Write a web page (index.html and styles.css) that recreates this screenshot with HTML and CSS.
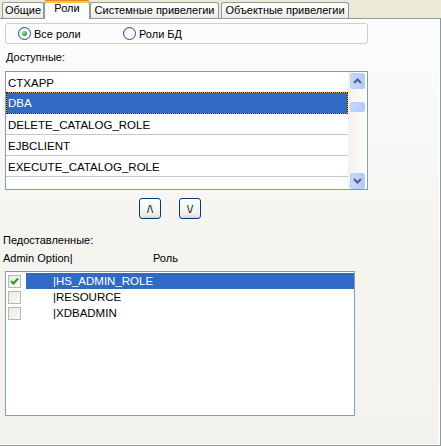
FILE: index.html
```html
<!DOCTYPE html>
<html>
<head>
<meta charset="utf-8">
<link rel="stylesheet" href="styles.css">
</head>
<body>
<div class="tabs">
  <div class="tab t1">Общие</div>
  <div class="tab active t2">Роли</div>
  <div class="tab t3">Системные привелегии</div>
  <div class="tab t4">Объектные привелегии</div>
</div>
<div class="panel">
  <div class="group">
    <div class="radio r1"><span class="circle checked"></span><span>Все роли</span></div>
    <div class="radio r2"><span class="circle"></span><span>Роли БД</span></div>
  </div>
  <div class="label lbl1">Доступные:</div>
  <div class="list1">
    <div class="rows">
      <div class="row">CTXAPP</div>
      <div class="row sel">DBA</div>
      <div class="row">DELETE_CATALOG_ROLE</div>
      <div class="row">EJBCLIENT</div>
      <div class="row">EXECUTE_CATALOG_ROLE</div>
    </div>
    <div class="scroll">
      <div class="sbtn up"><svg width="9" height="6" viewBox="0 0 9 6"><path d="M1 5 L4.5 1.5 L8 5" fill="none" stroke="#4d6185" stroke-width="2"/></svg></div>
      <div class="thumb"></div>
      <div class="track"></div>
      <div class="sbtn down"><svg width="9" height="6" viewBox="0 0 9 6"><path d="M1 1 L4.5 4.5 L8 1" fill="none" stroke="#4d6185" stroke-width="2"/></svg></div>
    </div>
  </div>
  <div class="btnrow">
    <div class="btn">/\</div>
    <div class="btn">\/</div>
  </div>
  <div class="label lbl2">Педоставленные:</div>
  <div class="header"><span class="h1">Admin Option|</span><span class="h2">Роль</span></div>
  <div class="list2">
    <div class="grow"><span class="cb checked"><svg width="9" height="9" viewBox="0 0 9 9"><path d="M1 4 L3.5 6.5 L8 1.5" fill="none" stroke="#21a121" stroke-width="2"/></svg></span><span class="cell sel">|HS_ADMIN_ROLE</span></div>
    <div class="grow"><span class="cb"></span><span class="cell">|RESOURCE</span></div>
    <div class="grow"><span class="cb"></span><span class="cell">|XDBADMIN</span></div>
  </div>
</div>
</body>
</html>
```
FILE: styles.css
```css
html, body {
  margin: 0;
  padding: 0;
}
body {
  width: 441px;
  height: 446px;
  background: #ece9d8;
  font-family: "Liberation Sans", Arial, sans-serif;
  font-size: 11px;
  color: #000;
  overflow: hidden;
}
.tabs {
  display: flex;
  align-items: flex-end;
  height: 18px;
  padding-left: 2px;
}
.tab {
  box-sizing: border-box;
  height: 16px;
  border: 1px solid #919b9c;
  border-bottom: none;
  border-radius: 3px 3px 0 0;
  background: linear-gradient(#ffffff, #ecebe5);
  display: flex;
  align-items: center;
  justify-content: center;
  padding-bottom: 1px;
  white-space: nowrap;
}
.t1 { width: 42px; }
.t2 { width: 46px; }
.t3 { width: 129px; }
.t4 { width: 128px; margin-left: 2px; }
.tab.active {
  height: 19px;
  margin-bottom: -1px;
  position: relative;
  z-index: 1;
  background: #fcfcfe;
  border-top: 1px solid #e68b2c;
  box-shadow: inset 0 2px 0 #ffc83c;
  border-radius: 3px 3px 0 0;
  padding-bottom: 4px;
}
.panel {
  box-sizing: border-box;
  width: 441px;
  height: 428px;
  border-top: 1px solid #919b9c;
  border-right: 1px solid #919b9c;
  border-bottom: 1px solid #919b9c;
  box-shadow: inset -1px -1px 0 #ffffff;
  background: linear-gradient(#fcfcfe, #f4f3ee 60%, #f3f2ec);
  padding-left: 5px;
}
.group {
  box-sizing: border-box;
  margin-top: 4px;
  width: 363px;
  height: 21px;
  border: 1px solid #d0d0bf;
  border-radius: 3px;
  display: flex;
  align-items: center;
  padding-left: 12px;
}
.radio {
  display: flex;
  align-items: center;
  gap: 3px;
}
.r1 { width: 105px; }
.circle {
  box-sizing: border-box;
  width: 13px;
  height: 13px;
  border: 1px solid #1c5180;
  border-radius: 50%;
  background: radial-gradient(circle at 60% 60%, #ffffff 30%, #dcdcd6 100%);
  display: flex;
  align-items: center;
  justify-content: center;
}
.circle.checked::after {
  content: "";
  width: 5px;
  height: 5px;
  border-radius: 50%;
  background: radial-gradient(circle at 35% 35%, #8ee38e, #21a121 70%);
}
.label {
  height: 13px;
  line-height: 13px;
}
.lbl1 { margin-top: 7px; padding-left: 1px; }
.lbl2 { margin-top: 15px; margin-left: -2px; }
.list1 {
  box-sizing: border-box;
  margin-top: 7px;
  width: 363px;
  height: 119px;
  border: 1px solid #7f9db9;
  background: #fff;
  display: flex;
}
.rows {
  width: 342px;
  font-size: 11.5px;
}
.row {
  box-sizing: border-box;
  height: 21px;
  line-height: 20px;
  padding-top: 1px;
  padding-left: 2px;
  border-bottom: 1px solid #c8c8c8;
  white-space: nowrap;
}
.row.sel {
  color: #fff;
  border: 1px dotted #1a1a1a;
  line-height: 19px;
  padding-left: 1px;
  background: linear-gradient(#316ac5, #316ac5) padding-box, linear-gradient(#e8a030, #e8a030) border-box;
  margin-top: -1px;
  height: 22px;
}
.scroll {
  flex: 1;
  background: linear-gradient(to right, #f3f1ec, #fefefb);
  display: flex;
  flex-direction: column;
  align-items: center;
  padding: 1px 0 0 0;
}
.sbtn, .thumb {
  box-sizing: border-box;
  width: 15px;
  border: 1px solid #b8cdf6;
  border-radius: 2px;
  background: linear-gradient(to right, #c8d8fc, #b5cafa);
  display: flex;
  align-items: center;
  justify-content: center;
}
.sbtn { height: 16px; }
.thumb { height: 10px; margin-top: 13px; }
.track { flex: 1; }
.btnrow {
  margin-top: 8px;
  height: 21px;
  display: flex;
  padding-left: 134px;
  gap: 18px;
}
.btn {
  box-sizing: border-box;
  width: 22px;
  height: 21px;
  border: 1px solid #003c74;
  border-radius: 3px;
  background: linear-gradient(#ffffff, #f0f0ea 80%, #d8d6ca);
  display: flex;
  align-items: center;
  justify-content: center;
  font-size: 11px;
}
.header {
  margin-top: 5px;
  margin-left: -2px;
  height: 13px;
  line-height: 13px;
  display: flex;
}
.h1 { width: 150px; }
.list2 {
  box-sizing: border-box;
  margin-top: 6px;
  width: 350px;
  height: 145px;
  border: 1px solid #7f9db9;
  background: #fff;
  padding-top: 1px;
}
.grow {
  height: 16px;
  display: flex;
  align-items: center;
}
.cb {
  box-sizing: border-box;
  width: 13px;
  height: 13px;
  margin-left: 2px;
  border: 1px solid #b8b8b0;
  background: linear-gradient(135deg, #ebebe4, #fafaf7);
  display: flex;
  align-items: center;
  justify-content: center;
}
.cell {
  margin-left: 5px;
  flex: 1;
  height: 16px;
  line-height: 16px;
  padding-left: 27px;
  white-space: nowrap;
  font-size: 11.5px;
}
.cell.sel {
  background: #316ac5;
  color: #fff;
}
```
